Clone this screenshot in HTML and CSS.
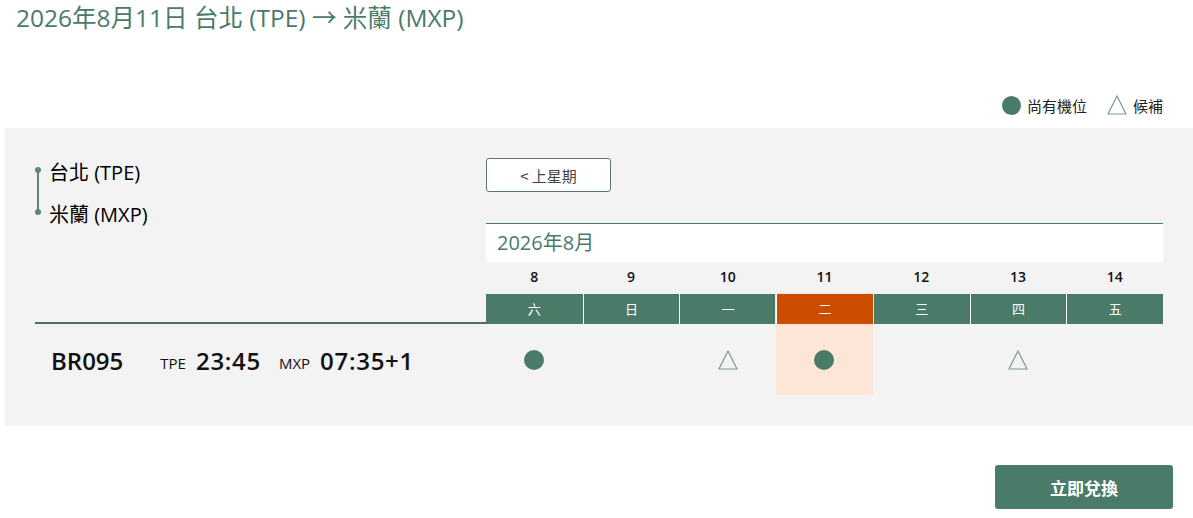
FILE: index.html
```html
<!DOCTYPE html>
<html lang="zh-Hant">
<head>
<meta charset="utf-8">
<link rel="stylesheet" href="styles.css">
</head>
<body>
<h1 class="title">2026年8月11日 台北 (TPE) → 米蘭 (MXP)</h1>
<div class="legend">
  <span class="legend-item"><span class="dot dot-sm"></span>尚有機位</span>
  <span class="legend-item"><svg class="tri" viewBox="0 0 20 20"><polygon points="10,1 19,19 1,19" fill="none" stroke="#7d9a91" stroke-width="1.2"/></svg>候補</span>
</div>
<section class="panel">
  <div class="route">
    <div class="route-line"></div>
    <div class="route-stop">台北 (TPE)</div>
    <div class="route-stop">米蘭 (MXP)</div>
  </div>
  <div class="cal">
    <button class="prev">&lt; 上星期</button>
    <div class="month">2026年8月</div>
    <div class="days">
      <div class="num">8</div><div class="num">9</div><div class="num">10</div><div class="num">11</div><div class="num">12</div><div class="num">13</div><div class="num">14</div>
    </div>
    <div class="days bar">
      <div class="wd">六</div><div class="wd">日</div><div class="wd">一</div><div class="wd sel">二</div><div class="wd">三</div><div class="wd">四</div><div class="wd">五</div>
    </div>
  </div>
  <div class="flight">
    <span class="fno">BR095</span>
    <span class="ap">TPE</span><span class="tm">23:45</span>
    <span class="ap">MXP</span><span class="tm">07:35+1</span>
  </div>
  <div class="days avail">
    <div class="cell"><span class="dot"></span></div>
    <div class="cell"></div>
    <div class="cell"><svg class="tri" viewBox="0 0 20 20"><polygon points="10,1 19,19 1,19" fill="none" stroke="#7d9a91" stroke-width="1.2"/></svg></div>
    <div class="cell sel"><span class="dot"></span></div>
    <div class="cell"></div>
    <div class="cell"><svg class="tri" viewBox="0 0 20 20"><polygon points="10,1 19,19 1,19" fill="none" stroke="#7d9a91" stroke-width="1.2"/></svg></div>
    <div class="cell"></div>
  </div>
</section>
<div class="actions">
  <button class="redeem">立即兌換</button>
</div>
</body>
</html>
```
FILE: styles.css
```css
* { box-sizing: border-box; }
body {
  margin: 0;
  font-family: "Open Sans", "Noto Sans CJK TC", sans-serif;
  color: #111;
  background: #fff;
}
.title {
  margin: 0;
  padding: 1px 0 0 16px;
  height: 40px;
  font-size: 24.5px;
  line-height: 34px;
  font-weight: 400;
  color: #4a7b68;
}
.legend {
  display: flex;
  justify-content: flex-end;
  gap: 20px;
  padding: 55px 30px 0 0;
  height: 88px;
  font-size: 15px;
  color: #222;
  font-family: "Noto Sans CJK TC", sans-serif;
}
.legend-item {
  display: flex;
  align-items: center;
  gap: 6px;
  height: 20px;
}
.dot {
  display: block;
  width: 20px;
  height: 20px;
  border-radius: 50%;
  background: #4a7b68;
}
.dot-sm { width: 19px; height: 19px; }
.tri { display: block; width: 20px; height: 20px; }
.panel {
  margin-left: 5px;
  background: #f3f3f3;
  display: grid;
  grid-template-columns: 451px 677px;
  padding: 30px 30px 31px 30px;
}
.route {
  position: relative;
  border-bottom: 2px solid #4f6f64;
  padding-left: 14px;
}
.route-line {
  position: absolute;
  left: 2px;
  top: 12px;
  width: 2px;
  height: 42px;
  background: #5f8478;
}
.route-line::before, .route-line::after {
  content: "";
  position: absolute;
  left: -2px;
  width: 6px;
  height: 6px;
  border-radius: 50%;
  background: #5f8478;
}
.route-line::before { top: -3px; }
.route-line::after { bottom: -3px; }
.route-stop {
  font-size: 20px;
  font-weight: 400;
  line-height: 30px;
  height: 42px;
  color: #000;
}
.cal { display: flex; flex-direction: column; align-items: flex-start; }
.prev {
  width: 125px;
  height: 34px;
  border: 1px solid #5d766d;
  border-radius: 3px;
  background: #fff;
  font-family: "Noto Sans CJK TC", sans-serif;
  font-size: 15px;
  color: #444;
  margin-bottom: 31px;
  padding: 0;
}
.month {
  width: 100%;
  height: 39px;
  border-top: 1px solid #4a7b68;
  background: #fff;
  font-size: 20px;
  line-height: 36px;
  color: #4a7b68;
  padding: 1px 0 0 11px;
}
.days {
  width: 100%;
  display: grid;
  grid-template-columns: repeat(7, 1fr);
}
.num {
  height: 32px;
  text-align: center;
  font-size: 14px;
  font-weight: 600;
  line-height: 30px;
  color: #111;
}
.bar .wd {
  height: 30px;
  background: #4a7b68;
  color: #fff;
  text-align: center;
  line-height: 30px;
  font-size: 13px;
  font-family: "Noto Sans CJK TC", sans-serif;
  border-left: 1px solid #fff;
}
.bar .wd:first-child { border-left: none; }
.bar .wd.sel {
  background: #cc4c00;
  box-shadow: 0 0 0 1px #fde6d8;
  position: relative;
}
.flight {
  height: 71px;
  display: flex;
  align-items: center;
  padding-left: 16px;
  padding-top: 2px;
}
.fno { font-size: 24px; font-weight: 600; margin-right: 37px; }
.ap { font-size: 15px; margin-right: 10px; padding-top: 4px; }
.tm { font-size: 24px; font-weight: 600; margin-right: 18px; letter-spacing: 0.7px; }
.avail .cell {
  height: 71px;
  display: flex;
  align-items: center;
  justify-content: center;
}
.avail .cell.sel { background: #fde6d8; }
.actions {
  display: flex;
  justify-content: flex-end;
  padding: 39px 20px 0 0;
}
.redeem {
  width: 178px;
  height: 44px;
  border: none;
  border-radius: 3px;
  background: #4a7b68;
  color: #fff;
  font-family: "Noto Sans CJK TC", sans-serif;
  font-size: 17px;
  font-weight: 700;
}
```
